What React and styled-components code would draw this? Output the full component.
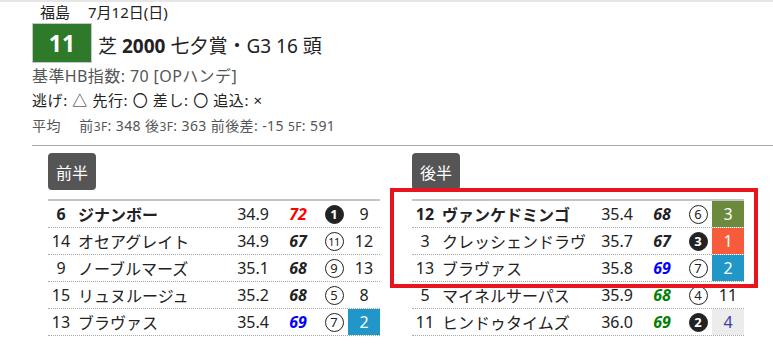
import React from "react";
import styled, { createGlobalStyle } from "styled-components";

const GlobalStyle = createGlobalStyle`
    body {
        margin: 0;
        background: #fff;
        color: #222;
        font-family: "Noto Sans", "Noto Sans CJK JP", sans-serif;
    }
`

const Page = styled.div`
    position: relative;
    width: 773px;
    height: 356px;
    overflow: hidden;
    border-top: 2px solid #e6e6e6;
    box-sizing: border-box;
`

const Info = styled.div`
    padding-left: 32px;
`

const DateLine = styled.div`
    height: 21px;
    line-height: 21px;
    padding-left: 8px;
    font-size: 15px;
    display: flex;
    gap: 18px;
`

const TitleRow = styled.div`
    display: flex;
    align-items: center;
    gap: 6px;
    height: 40px;
`

const RaceNo = styled.div`
    width: 60px;
    height: 40px;
    box-sizing: border-box;
    border: 1px solid #c8c8c8;
    background: #2e7a2a;
    color: #fff;
    font-weight: bold;
    font-size: 23px;
    display: flex;
    align-items: center;
    justify-content: center;
    font-family: "Open Sans", "Noto Sans", sans-serif;
`

const Title = styled.div`
    font-size: 19px;
    padding-top: 4px;
    b { font-weight: bold; }
`

const Line = styled.div`
    font-size: ${p => p.size}px;
    color: ${p => p.color || "#222"};
    height: 22px;
    line-height: 22px;
    margin-top: ${p => p.mt || 0}px;
    letter-spacing: ${p => p.ls || 0}px;
    white-space: pre;
`

const Small = styled.span`
    font-size: 12px;
`

const Rule = styled.div`
    margin: 8px 0 0 32px;
    border-top: 1px solid #a8a8a8;
`

const Columns = styled.div`
    display: grid;
    grid-template-columns: 364px 364px;
    padding-left: 32px;
`

const Col = styled.div`
    padding: 7px 16px 0;
`

const Badge = styled.div`
    display: inline-flex;
    align-items: center;
    justify-content: center;
    width: 48px;
    height: 37px;
    background: #555;
    color: #fff;
    border-radius: 4px;
    font-size: 16px;
`

const Table = styled.div`
    margin-top: 9px;
    border-top: 2px solid #c4c4c4;
`

const Row = styled.div`
    display: grid;
    grid-template-columns: 26px 156px 46px 44px 28px 32px;
    height: 26px;
    border-bottom: 1px dotted #a8a8a8;
    font-size: 16px;
    align-items: stretch;
    font-weight: ${p => p.bold ? "bold" : "normal"};
`

const Cell = styled.div`
    display: flex;
    align-items: center;
    justify-content: ${p => p.left ? "flex-start" : "center"};
    padding-left: ${p => p.left ? "4px" : "0"};
    white-space: nowrap;
`

const Time = styled(Cell)`
    font-weight: normal;
`

const Index = styled(Cell)`
    font-weight: bold;
    font-style: italic;
    color: ${p => p.color};
`

const Circle = styled.span`
    display: inline-flex;
    align-items: center;
    justify-content: center;
    width: 19px;
    height: 19px;
    box-sizing: border-box;
    border-radius: 50%;
    border: 1.2px solid #222;
    background: ${p => p.filled ? "#222" : "transparent"};
    color: ${p => p.filled ? "#fff" : "#222"};
    font-size: ${p => p.wide ? 11 : 13}px;
    font-weight: ${p => p.filled ? "bold" : "normal"};
    letter-spacing: ${p => p.wide ? -0.5 : 0}px;
    line-height: 1;
`

const Rank = styled(Cell)`
    font-weight: normal;
    background: ${p => p.bg || "transparent"};
    color: ${p => p.fg || "#222"};
`

const Highlight = styled.div`
    position: absolute;
    left: 390px;
    top: 186px;
    width: 368px;
    height: 100px;
    box-sizing: border-box;
    border: 4px solid #e8141e;
    pointer-events: none;
`

const idxColor = {
    red: "#ff0000",
    blue: "#0000ff",
    green: "#008000",
    black: "#222",
}

const rankStyle = {
    olive: { bg: "#6b8a3e", fg: "#fff" },
    orange: { bg: "#f75b3b", fg: "#fff" },
    blue: { bg: "#2196c8", fg: "#fff" },
    gray: { bg: "#ececec", fg: "#3b3bb0" },
    none: {},
}

const first = [
    { no: 6, name: "ジナンボー", time: "34.9", idx: 72, ic: "red", mark: 1, filled: true, rank: 9, rs: "none", bold: true },
    { no: 14, name: "オセアグレイト", time: "34.9", idx: 67, ic: "black", mark: 11, rank: 12, rs: "none" },
    { no: 9, name: "ノーブルマーズ", time: "35.1", idx: 68, ic: "black", mark: 9, rank: 13, rs: "none" },
    { no: 15, name: "リュヌルージュ", time: "35.2", idx: 68, ic: "black", mark: 5, rank: 8, rs: "none" },
    { no: 13, name: "ブラヴァス", time: "35.4", idx: 69, ic: "blue", mark: 7, rank: 2, rs: "blue" },
]

const second = [
    { no: 12, name: "ヴァンケドミンゴ", time: "35.4", idx: 68, ic: "black", mark: 6, rank: 3, rs: "olive", bold: true },
    { no: 3, name: "クレッシェンドラヴ", time: "35.7", idx: 67, ic: "black", mark: 3, filled: true, rank: 1, rs: "orange" },
    { no: 13, name: "ブラヴァス", time: "35.8", idx: 69, ic: "blue", mark: 7, rank: 2, rs: "blue" },
    { no: 5, name: "マイネルサーパス", time: "35.9", idx: 68, ic: "green", mark: 4, rank: 11, rs: "none" },
    { no: 11, name: "ヒンドゥタイムズ", time: "36.0", idx: 69, ic: "green", mark: 2, filled: true, rank: 4, rs: "gray" },
]

const HalfTable = ({ label, rows }) => (
    <Col>
        <Badge>{label}</Badge>
        <Table>
            {rows.map(r => (
                <Row key={`${label}-${r.no}`} bold={r.bold}>
                    <Cell>{r.no}</Cell>
                    <Cell left>{r.name}</Cell>
                    <Time>{r.time}</Time>
                    <Index color={idxColor[r.ic]}>{r.idx}</Index>
                    <Cell>
                        <Circle filled={r.filled} wide={r.mark > 9}>{r.mark}</Circle>
                    </Cell>
                    <Rank {...rankStyle[r.rs]}>{r.rank}</Rank>
                </Row>
            ))}
        </Table>
    </Col>
)

export default function App() {
    return (
        <Page>
            <GlobalStyle />
            <Info>
                <DateLine>
                    <span>福島</span>
                    <span>7月12日(日)</span>
                </DateLine>
                <TitleRow>
                    <RaceNo>11</RaceNo>
                    <Title>芝 <b>2000</b> 七夕賞・G3 16 頭</Title>
                </TitleRow>
                <Line size={16} color="#555" mt={2} ls={0.4}>基準HB指数: 70 [OPハンデ]</Line>
                <Line size={15} mt={2} ls={0.6}>逃げ: △ 先行: 〇 差し: 〇 追込: ×</Line>
                <Line size={14} color="#555" mt={4} ls={0.4}>平均　 前<Small>3F</Small>: 348 後<Small>3F</Small>: 363 前後差: -15 <Small>5F</Small>: 591</Line>
            </Info>
            <Rule />
            <Columns>
                <HalfTable label="前半" rows={first} />
                <HalfTable label="後半" rows={second} />
            </Columns>
            <Highlight />
        </Page>
    )
}
